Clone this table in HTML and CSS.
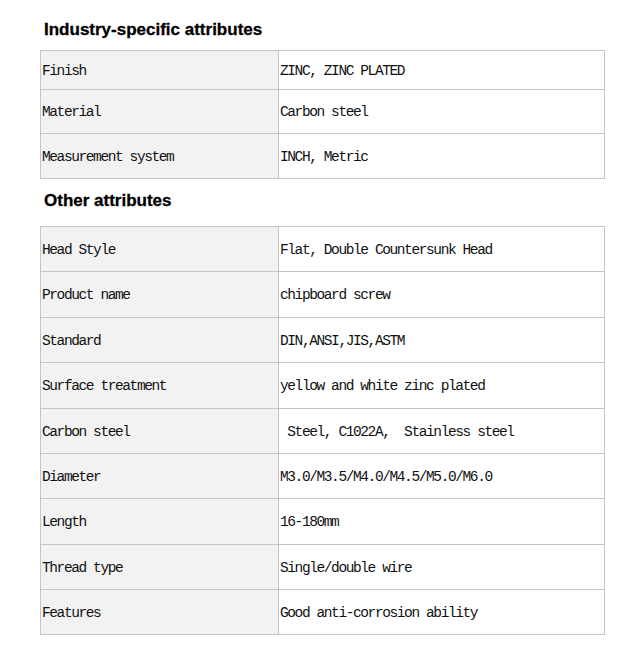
FILE: index.html
```html
<!DOCTYPE html>
<html>
<head>
<meta charset="utf-8">
<link rel="stylesheet" href="styles.css">
</head>
<body>
<div class="page">
  <h3 class="title first">Industry-specific attributes</h3>
  <table class="attrs">
    <tr class="r39"><td class="k">Finish</td><td class="v">ZINC, ZINC PLATED</td></tr>
    <tr class="r44"><td class="k">Material</td><td class="v">Carbon steel</td></tr>
    <tr class="r45"><td class="k">Measurement system</td><td class="v">INCH, Metric</td></tr>
  </table>
  <h3 class="title second">Other attributes</h3>
  <table class="attrs">
    <tr class="r45"><td class="k">Head Style</td><td class="v">Flat, Double Countersunk Head</td></tr>
    <tr class="r46"><td class="k">Product name</td><td class="v">chipboard screw</td></tr>
    <tr class="r45"><td class="k">Standard</td><td class="v">DIN,ANSI,JIS,ASTM</td></tr>
    <tr class="r46"><td class="k">Surface treatment</td><td class="v">yellow and white zinc plated</td></tr>
    <tr class="r45"><td class="k">Carbon steel</td><td class="v">&nbsp;Steel, C1022A, &nbsp;Stainless steel</td></tr>
    <tr class="r45"><td class="k">Diameter</td><td class="v">M3.0/M3.5/M4.0/M4.5/M5.0/M6.0</td></tr>
    <tr class="r46"><td class="k">Length</td><td class="v">16-180mm</td></tr>
    <tr class="r45"><td class="k">Thread type</td><td class="v">Single/double wire</td></tr>
    <tr class="r45"><td class="k">Features</td><td class="v">Good anti-corrosion ability</td></tr>
  </table>
</div>
</body>
</html>
```
FILE: styles.css
```css
html, body {
  margin: 0;
  padding: 0;
  background: #ffffff;
}
.page {
  padding: 0 0 0 40px;
}
.title {
  font-family: "Liberation Sans", Arial, sans-serif;
  font-weight: bold;
  font-size: 17px;
  line-height: 20px;
  color: #000;
  margin: 0 0 0 4px;
  -webkit-text-stroke: 0.3px #000;
}
.title.first {
  padding-top: 20px;
  margin-bottom: 10px;
}
.title.second {
  margin-top: 12px;
  margin-bottom: 15px;
}
.attrs {
  border-collapse: collapse;
  width: 565px;
  table-layout: fixed;
}
.attrs td {
  border: 1px solid #c4c4c4;
  padding: 1px 0 0 1px;
  font-family: "Liberation Mono", "Courier New", monospace;
  font-size: 14.5px;
  letter-spacing: -1.4px;
  color: #111;
  vertical-align: middle;
  white-space: pre;
}
.attrs td.k {
  width: 236px;
  background: #f2f2f2;
}
.attrs td.v {
  background: #fff;
}
.r39 { height: 39px; }
.r44 { height: 44px; }
.r45 { height: 45px; }
.r46 { height: 46px; }
```
